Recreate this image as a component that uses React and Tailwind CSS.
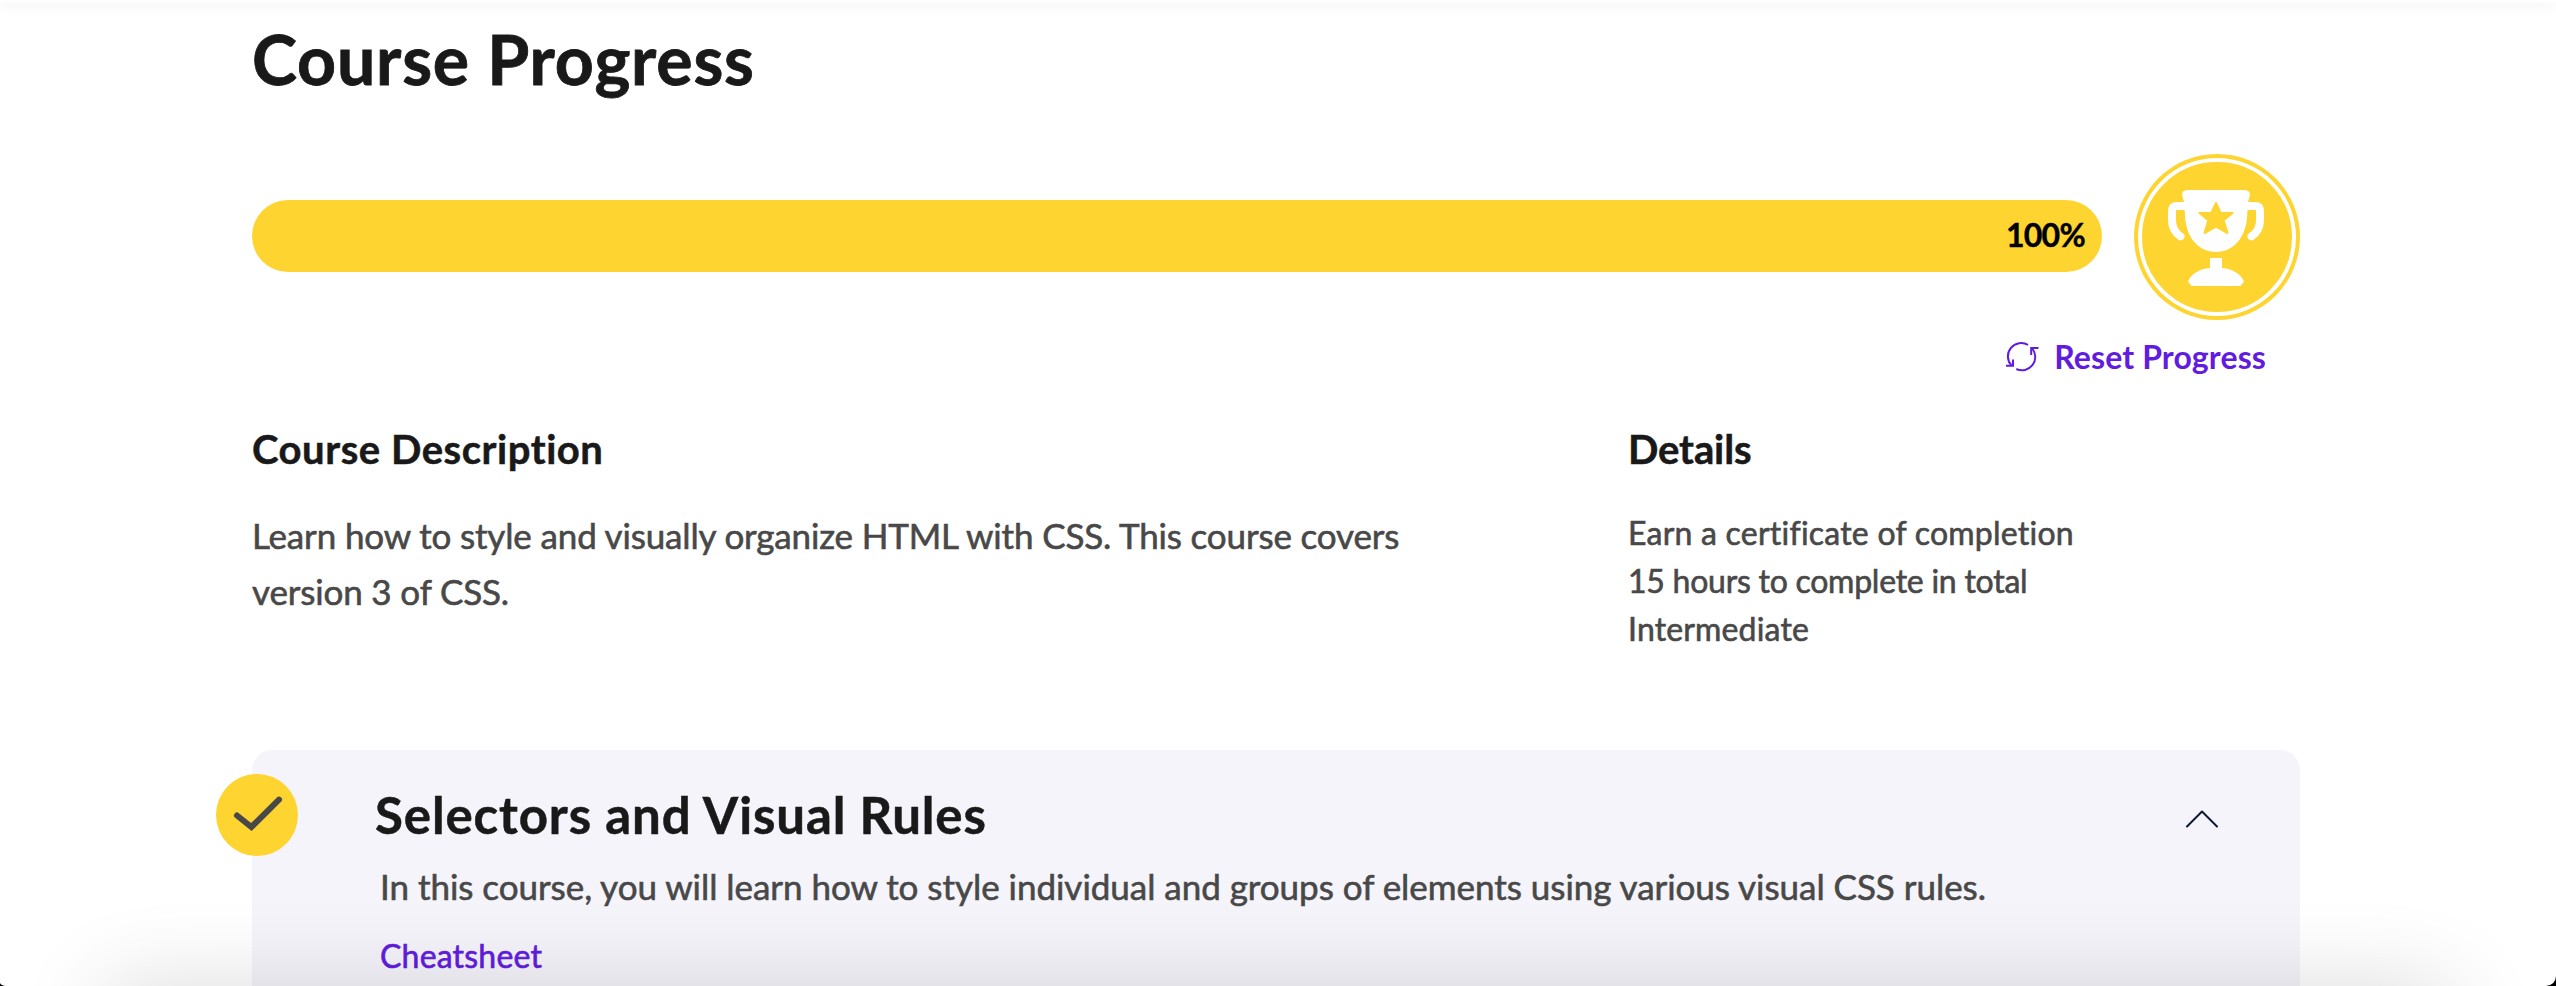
function TrophyBadge() {
  return (
    <svg className="size-[166px] shrink-0" viewBox="0 0 166 166" fill="none" aria-hidden="true">
      <circle cx="83" cy="83" r="83" fill="#fed430" />
      <circle cx="83" cy="83" r="77" stroke="#fff" strokeWidth="4" />
      <path
        d="M54 36H110Q117 36 115.7 42L114 48L113.3 60C112.5 84 99 98 82 98C65 98 51.5 84 50.9 60L50 48L48.3 42Q47 36 54 36Z"
        fill="#fff"
      />
      <path
        d="M51 52H43Q38 52 38 57V66C38 74 40.5 78.500 46.500 82.300M113 52H121Q126 52 126 57V66C126 74 123.500 78.500 117.500 82.300"
        stroke="#fff"
        strokeWidth="8"
        strokeLinecap="round"
      />
      <path
        d="M82 49L86.700 59H98.500L89.700 66.300L93.500 79L82 72.700L70.500 79L74.300 66.300L65.500 59H77.300Z"
        fill="#fed430"
        stroke="#fed430"
        strokeWidth="2"
        strokeLinejoin="round"
      />
      <path
        d="M76 104H88V114C98 114.500 107 120 110 127.500L106.500 132H57.500L54 127.500C57 120 66 114.500 76 114Z"
        fill="#fff"
      />
    </svg>
  );
}

function ResetIcon() {
  return (
    <svg className="h-8 w-[33px]" viewBox="0 0 33 32" fill="none" stroke="currentColor" strokeWidth="2" aria-hidden="true">
      <path d="M5.300 24.200A13.300 13.300 0 0 1 22 3.900" />
      <path d="M0 24.700H7V18.500" />
      <path d="M26.300 7.600A13.300 13.300 0 0 1 10.300 28" />
      <path d="M32.500 7H25.200V14" />
    </svg>
  );
}

function CheckBadge() {
  return (
    <svg className="absolute top-6 -left-9 size-[82px]" viewBox="0 0 82 82" fill="none" aria-hidden="true">
      <circle cx="41" cy="41" r="41" fill="#fed430" />
      <path d="M21 41.500L35.400 53L63 25.700" stroke="#484848" strokeWidth="6" strokeLinecap="round" />
    </svg>
  );
}

function ChevronUp() {
  return (
    <svg className="mt-[27px] h-[18px] w-8" viewBox="0 0 32 18" fill="none" aria-hidden="true">
      <path d="M1 16.500L16 1.500L31 16.500" stroke="#10162f" strokeWidth="2" strokeLinecap="round" strokeLinejoin="round" />
    </svg>
  );
}

const details = [
  { text: 'Earn a certificate of completion', spacing: 'tracking-[0.23px]' },
  { text: '15 hours to complete in total', spacing: 'tracking-[-0.25px]' },
  { text: 'Intermediate', spacing: 'tracking-[0.16px]' },
];

export default function App() {
  return (
    <div className="relative h-[986px] overflow-hidden bg-white font-['Lato',sans-serif] text-[#484848]">
      <div className="relative h-0.5 bg-white shadow-[0_4px_12px_rgba(0,0,0,0.14)]" />

      <main className="ml-[252px] w-[2048px] pt-[17px]">
        <h1 className="text-[68px] leading-[80px] font-bold tracking-[0.8px] text-[#19191a] [-webkit-text-stroke:0.8px]">
          Course Progress
        </h1>

        <div className="mt-[55px] flex items-center justify-between">
          <div className="mb-0.5 flex h-[72px] w-[1850px] items-center justify-end rounded-full bg-[#fed430] pr-[17px] pb-0.5">
            <span className="text-[32px] leading-[70px] font-bold tracking-[-0.7px] text-black [-webkit-text-stroke:0.4px]">100%</span>
          </div>
          <TrophyBadge />
        </div>

        <div className="mt-[13px] flex justify-end pr-[34px]">
          <button className="flex h-12 items-center gap-[15px] text-[32px] leading-[48px] font-bold tracking-[0.12px] text-[#621cdf]">
            <ResetIcon />
            Reset Progress
          </button>
        </div>

        <div className="mt-11 flex">
          <section className="w-[1376px]">
            <h2 className="text-[40px] leading-[48px] font-bold tracking-[0.55px] text-[#19191a] [-webkit-text-stroke:0.5px]">
              Course Description
            </h2>
            <p className="mt-[34px] w-[1200px] text-[35px] leading-[56px] tracking-[-0.15px] [-webkit-text-stroke:0.6px]">
              Learn how to style and visually organize HTML with CSS. This course covers
              <br />
              version 3 of CSS.
            </p>
          </section>
          <section>
            <h2 className="text-[40px] leading-[48px] font-bold tracking-[-0.1px] text-[#19191a] [-webkit-text-stroke:0.5px]">Details</h2>
            <ul className="mt-9 text-[32px] leading-[48px] [-webkit-text-stroke:0.6px]">
              {details.map((item) => (
                <li key={item.text} className={item.spacing}>
                  {item.text}
                </li>
              ))}
            </ul>
          </section>
        </div>

        <article className="relative mt-[97px] flex h-[300px] justify-between rounded-[20px] bg-[#f5f4fa] pt-[33px] pr-[82px] pl-[123px]">
          <CheckBadge />
          <div>
            <h2 className="text-[51px] leading-[64px] font-bold tracking-[0.88px] text-[#19191a] [-webkit-text-stroke:0.5px]">
              Selectors and Visual Rules
            </h2>
            <p className="mt-[11px] pl-[5px] text-[35px] leading-[56px] tracking-[-0.035px] [-webkit-text-stroke:0.6px]">
              In this course, you will learn how to style individual and groups of elements using various visual CSS rules.
            </p>
            <a className="mt-[18px] block pl-[5px] text-[32px] leading-[48px] tracking-[0.2px] text-[#621cdf] [-webkit-text-stroke:0.6px]">
              Cheatsheet
            </a>
          </div>
          <ChevronUp />
        </article>
      </main>

      {/* Soft shadow cast upward by whatever sits below the window edge */}
      <div className="pointer-events-none absolute inset-x-[104px] top-full h-[200px] shadow-[0_0_90px_rgba(0,0,0,0.14)]" />
      <svg className="absolute bottom-0 left-0 h-[3px] w-[6px]" viewBox="0 0 6 3" aria-hidden="true">
        <path d="M0 0Q1 2.500 6 3H0Z" fill="#000" />
      </svg>
      <svg className="absolute right-0 bottom-0 size-[10px]" viewBox="0 0 10 10" aria-hidden="true">
        <path d="M10 0Q9.500 9 0 10H10Z" fill="#000" />
      </svg>
    </div>
  );
}
